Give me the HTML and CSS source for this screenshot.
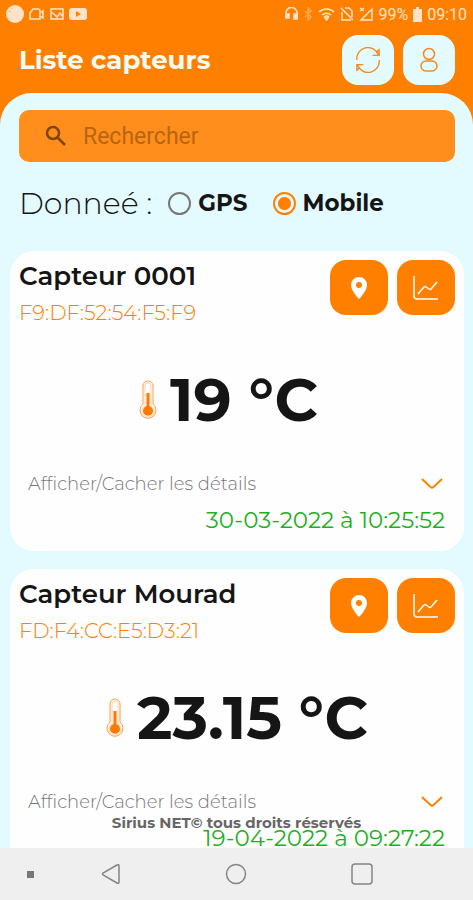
FILE: index.html
```html
<!DOCTYPE html>
<html lang="fr">
<head>
  <meta charset="UTF-8" />
  <meta name="viewport" content="width=device-width, initial-scale=1.0"/>
  <title>Liste capteurs</title>
  <link rel="stylesheet" href="styles.css">
</head>
<body>
  <!-- Icônes partagées -->
  <svg class="sprite" aria-hidden="true">
    <symbol id="pin" viewBox="0 0 24 24">
      <path fill="currentColor" fill-rule="evenodd" d="M12 1a8 8 0 0 0-8 8c0 6 8 14 8 14s8-8 8-14a8 8 0 0 0-8-8zm0 5a3 3 0 1 1 0 6 3 3 0 0 1 0-6z"/>
    </symbol>
    <symbol id="chart" viewBox="0 0 26 26">
      <path d="M1 1v20q0 3 3 3h21M5 19l6-7q1-1 2 0l3 2q1 1 2 0l6-7"/>
    </symbol>
    <symbol id="thermo" viewBox="0 0 18 40">
      <path d="M4 24V6a5 5 0 0 1 10 0v18a8 8 0 1 1-10 0z" fill="none" stroke="#ff9d42"/>
      <path d="M6 26V6a3 3 0 0 1 6 0v20a6 6 0 1 1-6 0z" fill="none" stroke="#ffc994" stroke-width=".8"/>
      <path d="M7.500 13h3v13a5 5 0 1 1-3 0z" fill="#ff7800"/>
    </symbol>
    <symbol id="chevron" viewBox="0 0 22 12">
      <path d="M1 1l8.500 8q1.500 1.200 3 0L21 1"/>
    </symbol>
  </svg>

  <!-- Barre d'état -->
  <div class="status-bar">
    <div class="status-group">
      <svg width="18" height="18" viewBox="0 0 18 18"><circle cx="9" cy="9" r="9" fill="currentColor"/><path d="M3 6l2 1M6 3v1" stroke="#ff9d42" stroke-width=".8"/></svg>
      <svg class="line" width="16" height="14" viewBox="0 0 16 14"><path d="M4 2h5q2 0 2 2v8H1V6zM11 6l3-2v7l-3-2"/></svg>
      <svg class="line" width="14" height="14" viewBox="0 0 14 14"><path d="M1 2h12v10H1zM1 5l3 2 3 3 3-4 3 4"/></svg>
      <svg width="18" height="14" viewBox="0 0 18 14"><rect y="1" width="18" height="12" rx="3" fill="currentColor"/><path d="M7 4l5 3-5 3z" fill="#ff8000"/></svg>
    </div>
    <div class="status-group">
      <svg class="line" width="13" height="14" viewBox="0 0 13 14"><path d="M1 10V6a5 5 0 0 1 11 0v6H8"/><path d="M1 7h3v4H1zM9 7h3v4H9z" fill="currentColor"/></svg>
      <svg class="line faded" width="10" height="14" viewBox="0 0 10 14"><path d="M2 4l6 6-3 3V1l3 3-6 6"/></svg>
      <svg class="line" width="17" height="14" viewBox="0 0 17 14"><path d="M1 5a11 11 0 0 1 15 0M4 8a7 7 0 0 1 9 0M6 10a4 4 0 0 1 5 0"/><path d="M7 11h3l-1.500 2z" fill="currentColor"/></svg>
      <svg class="line" width="14" height="14" viewBox="0 0 14 14"><path d="M1 1l12 12M2 5v8h9M5 1h4l3 3v6"/></svg>
      <svg class="line" width="14" height="14" viewBox="0 0 14 14"><path d="M13 2v11H2zM1 1l4 3M5 1L1 4"/></svg>
      <span>99%</span>
      <svg width="9" height="15" viewBox="0 0 9 15"><path d="M3 0h3v2h3v13H0V2h3z" fill="currentColor"/></svg>
      <span>09:10</span>
    </div>
  </div>

  <header class="header">
    <h1 class="title">Liste capteurs</h1>
    <div class="header-actions">
      <button class="header-btn" aria-label="Actualiser">
        <svg width="26" height="26" viewBox="0 0 28 28"><path d="M2 14A12 12 0 0 1 25 8M26 2v7h-7M26 14A12 12 0 0 1 3 20M2 26v-7h7M26 3l-3 3M2 25l3-3"/></svg>
      </button>
      <button class="header-btn" aria-label="Profil">
        <svg width="20" height="26" viewBox="0 0 20 26"><circle cx="10" cy="7" r="5.500"/><rect x="2" y="14" width="16" height="10" rx="5"/></svg>
      </button>
    </div>
  </header>

  <main class="content">
    <div class="search">
      <svg width="22" height="22" viewBox="0 0 22 22"><circle cx="8" cy="8" r="6"/><path d="M12.500 12.500L20 20"/></svg>
      <input class="search-input" type="search" placeholder="Rechercher" aria-label="Rechercher">
    </div>

    <div class="source" role="radiogroup" aria-labelledby="sourceLabel">
      <span class="source-label" id="sourceLabel">Donneé :</span>
      <label class="option"><input type="radio" name="source" value="gps">GPS</label>
      <label class="option"><input type="radio" name="source" value="mobile" checked>Mobile</label>
    </div>

    <div class="sensor-list">
      <article class="card">
        <div class="card-head">
          <div class="card-info">
            <h2 class="card-title">Capteur 0001</h2>
            <p class="card-mac">F9:DF:52:54:F5:F9</p>
          </div>
          <div class="card-actions">
            <button class="card-btn" aria-label="Carte"><svg width="24" height="24"><use href="#pin"/></svg></button>
            <button class="card-btn" aria-label="Graphique"><svg width="26" height="26"><use href="#chart"/></svg></button>
          </div>
        </div>
        <div class="reading">
          <svg width="18" height="40"><use href="#thermo"/></svg>
          <span>19 °C&nbsp;</span>
        </div>
        <button class="details-toggle" aria-expanded="false">
          <span>Afficher/Cacher les détails</span>
          <svg width="22" height="12"><use href="#chevron"/></svg>
        </button>
        <p class="card-date">30-03-2022 à 10:25:52</p>
      </article>

      <article class="card">
        <div class="card-head">
          <div class="card-info">
            <h2 class="card-title">Capteur Mourad</h2>
            <p class="card-mac">FD:F4:CC:E5:D3:21</p>
          </div>
          <div class="card-actions">
            <button class="card-btn" aria-label="Carte"><svg width="24" height="24"><use href="#pin"/></svg></button>
            <button class="card-btn" aria-label="Graphique"><svg width="26" height="26"><use href="#chart"/></svg></button>
          </div>
        </div>
        <div class="reading">
          <svg width="18" height="40"><use href="#thermo"/></svg>
          <span>23.15 °C</span>
        </div>
        <button class="details-toggle" aria-expanded="false">
          <span>Afficher/Cacher les détails</span>
          <svg width="22" height="12"><use href="#chevron"/></svg>
        </button>
        <p class="card-date">19-04-2022 à 09:27:22</p>
      </article>
    </div>

    <p class="copyright">Sirius NET© tous droits réservés</p>
  </main>

  <!-- Navigation système -->
  <nav class="system-nav">
    <span class="nav-dot"></span>
    <button class="nav-btn" aria-label="Retour"><svg width="22" height="22" viewBox="0 0 22 22"><path d="M17 2q2-1 2 1v16q0 2-2 1L3 12q-1-1 0-2z"/></svg></button>
    <button class="nav-btn" aria-label="Accueil"><svg width="22" height="22" viewBox="0 0 22 22"><circle cx="11" cy="11" r="9.500"/></svg></button>
    <button class="nav-btn" aria-label="Applications"><svg width="22" height="22" viewBox="0 0 22 22"><rect x="1" y="1" width="20" height="20" rx="3"/></svg></button>
  </nav>
</body>
</html>
```
FILE: styles.css
```css
:root {
  --orange: #ff8000;
  --ice: #e3faff;
  --black: #151515;
  --green: #1fb01f;
}
* { box-sizing: border-box; }
body {
  display: flex;
  flex-direction: column;
  height: 100vh;
  margin: 0;
  overflow: hidden;
  background: var(--orange);
  color: var(--black);
  font-family: Montserrat, Inter, sans-serif;
}
h1, h2, p { margin: 0; }
button {
  padding: 0;
  border: none;
  background: none;
  font-family: inherit;
  cursor: pointer;
}
svg { display: block; flex: none; }
.sprite { position: absolute; width: 0; height: 0; }

/* barre d'état */
.status-bar {
  display: flex;
  justify-content: space-between;
  align-items: center;
  flex: none;
  height: 28px;
  padding: 0 6px;
  color: #ffe3c8;
  font-family: Roboto, sans-serif;
  font-size: 16px;
}
.status-group {
  display: flex;
  align-items: center;
  gap: 5px;
}
.line {
  fill: none;
  stroke: currentColor;
  stroke-width: 1.5;
}
.faded { opacity: 0.4; }

.header {
  display: flex;
  justify-content: space-between;
  align-items: center;
  flex: none;
  padding: 7px 18px 8px 19px;
}
.title {
  color: #f2fbf4;
  font-size: 26px;
  font-weight: 700;
}
.header-actions, .card-actions {
  display: flex;
  gap: 9px;
}
.header-btn {
  display: grid;
  place-items: center;
  width: 52px;
  height: 50px;
  border-radius: 16px;
  background: var(--ice);
}
.header-btn svg {
  fill: none;
  stroke: #f58a1f;
  stroke-width: 1.5;
}

.content {
  position: relative;
  flex: 1;
  min-height: 0;
  padding: 17px 9px 0 10px;
  overflow: hidden;
  border-radius: 32px 32px 0 0;
  background: var(--ice);
}
.search {
  display: flex;
  align-items: center;
  gap: 16px;
  height: 52px;
  margin: 0 9px;
  padding: 0 26px;
  border-radius: 10px;
  background: #ff8e1c;
}
.search svg {
  fill: none;
  stroke: #804508;
  stroke-width: 2.5;
}
.search-input {
  flex: 1;
  min-width: 0;
  padding: 0;
  border: none;
  outline: none;
  background: none;
  color: #804508;
  font-family: Roboto, sans-serif;
  font-size: 23px;
}
.search-input::placeholder { color: #b8650f; }

.source {
  display: flex;
  align-items: center;
  height: 82px;
  padding-left: 9px;
}
.source-label {
  margin-right: 16px;
  font-size: 30px;
  font-weight: 300;
}
.option {
  display: flex;
  align-items: center;
  gap: 7px;
  margin-right: 25px;
  font-size: 23px;
  font-weight: 700;
}
.option input {
  appearance: none;
  width: 23px;
  height: 23px;
  margin: 0;
  border: 2px solid #777;
  border-radius: 50%;
}
.option input:checked {
  border-color: var(--orange);
  background: radial-gradient(circle, var(--orange) 6px, transparent 7px);
}

.sensor-list {
  display: flex;
  flex-direction: column;
  gap: 18px;
  padding-top: 7px;
}
.card {
  padding: 9px 9px 13px;
  border-radius: 24px;
  background: #fefefe;
}
.card-head {
  display: flex;
  justify-content: space-between;
  align-items: flex-start;
}
.card-title {
  font-size: 26px;
  font-weight: 600;
  line-height: 32px;
}
.card-mac {
  color: var(--orange);
  font-size: 21px;
  font-weight: 300;
  line-height: 42px;
}
.card-btn {
  display: grid;
  place-items: center;
  width: 58px;
  height: 55px;
  border-radius: 16px;
  background: var(--orange);
  color: #fff;
}
.card-btn svg {
  fill: none;
  stroke-width: 1.5;
}
.card-btn:last-child svg { stroke: #fff; }
.reading {
  display: flex;
  justify-content: center;
  align-items: center;
  gap: 13px;
  font-size: 60px;
  font-weight: 700;
  line-height: 132px;
}
.details-toggle {
  display: flex;
  justify-content: space-between;
  align-items: center;
  width: 100%;
  padding: 0 12px 0 9px;
  color: #777;
  font-size: 18px;
  font-weight: 300;
  line-height: 36px;
}
.details-toggle svg {
  fill: none;
  stroke: var(--orange);
  stroke-width: 2;
}
.card-date {
  padding-right: 10px;
  color: var(--green);
  font-size: 23px;
  font-weight: 400;
  line-height: 36px;
  text-align: right;
}

/* par-dessus la liste */
.copyright {
  position: absolute;
  left: 0; right: 0; bottom: 15px;
  color: #666;
  font-size: 15px;
  font-weight: 700;
  line-height: 20px;
  text-align: center;
}

.system-nav {
  position: relative;
  display: flex;
  justify-content: space-around;
  align-items: center;
  flex: none;
  height: 52px;
  padding: 0 48px;
  background: #efefef;
}
.nav-btn svg {
  fill: none;
  stroke: #858585;
  stroke-width: 1.5;
}
.nav-dot {
  position: absolute;
  left: 27px;
  width: 7px;
  height: 7px;
  background: #777;
}
```
